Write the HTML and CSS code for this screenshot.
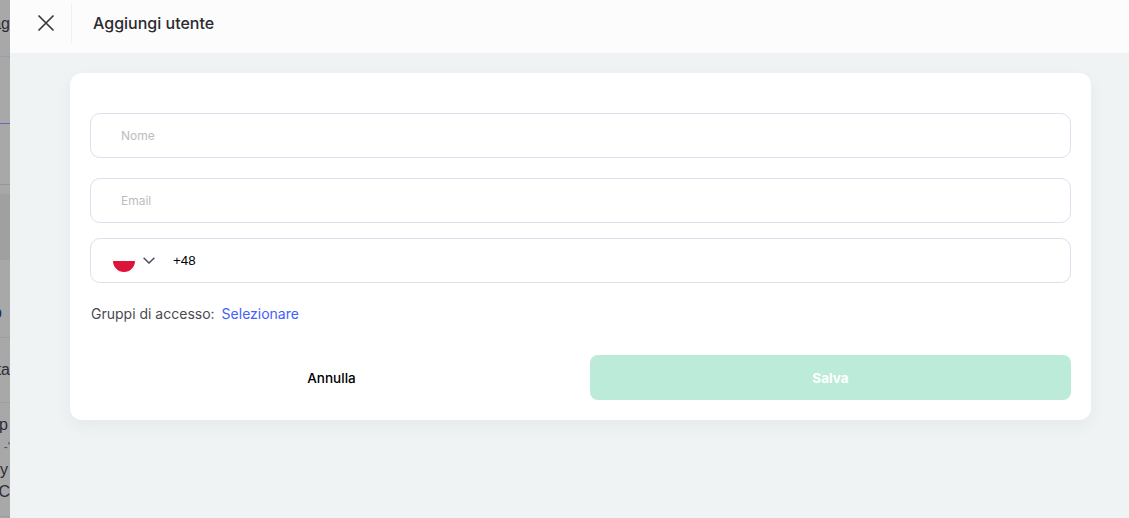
FILE: index.html
```html
<!DOCTYPE html>
<html lang="it">
<head>
<meta charset="utf-8">
<title>Aggiungi utente</title>
<link rel="stylesheet" href="styles.css">
</head>
<body>
<div class="backdrop">
  <div class="frag frag-ag">ag</div>
  <div class="line line-1"></div>
  <div class="line line-2"></div>
  <div class="line line-3"></div>
  <div class="band"></div>
  <div class="frag frag-o">o</div>
  <div class="line line-4"></div>
  <div class="frag frag-ta">ta</div>
  <div class="line line-5"></div>
  <div class="frag frag-p">p</div>
  <div class="frag frag-dash">-'</div>
  <div class="frag frag-y">y</div>
  <div class="frag frag-c">C</div>
  <div class="line line-6"></div>
</div>
<main class="panel">
  <header class="topbar">
    <button class="close" type="button" aria-label="Chiudi">
      <svg width="18" height="18" viewBox="0 0 18 18"><path d="M1.500 1.500l15 15M16.500 1.500l-15 15" fill="none" stroke="#3a3a3a" stroke-width="1.700"/></svg>
    </button>
    <h1 class="title">Aggiungi utente</h1>
  </header>
  <div class="content">
    <form class="card">
      <div class="field field-name"><span class="placeholder">Nome</span></div>
      <div class="field field-email"><span class="placeholder">Email</span></div>
      <div class="field field-phone">
        <span class="flag"></span>
        <svg class="chevron" width="12" height="7" viewBox="0 0 12 7"><path d="M.6.8L6 6l5.400-5.200" fill="none" stroke="#48505c" stroke-width="1.500"/></svg>
        <span class="prefix">+48</span>
      </div>
      <div class="access"><span class="access-label">Gruppi di accesso:</span><a class="access-link">Selezionare</a></div>
      <div class="actions">
        <button class="btn btn-cancel" type="button">Annulla</button>
        <button class="btn btn-save" type="button">Salva</button>
      </div>
    </form>
  </div>
</main>
</body>
</html>
```

FILE: styles.css
```css
* { box-sizing: border-box; }
html, body { height: 100%; }
body {
  margin: 0;
  display: flex;
  height: 518px;
  overflow: hidden;
  font-family: Inter, "Liberation Sans", sans-serif;
  background: #eff3f4;
}
.backdrop {
  position: relative;
  width: 10px;
  flex: none;
  overflow: hidden;
  background: #a8a8a8;
}
.frag {
  position: absolute;
  right: 0;
  font-family: "Liberation Sans", sans-serif;
  font-size: 16px;
  line-height: 18px;
  color: #2c2c34;
  white-space: nowrap;
}
.frag-ag { top: 15px; }
.frag-o { top: 304px; right: auto; left: -7px; color: #1c2c60; }
.frag-ta { top: 361px; }
.frag-p { top: 416px; right: 2px; }
.frag-dash { top: 438px; font-size: 12px; color: #55555c; }
.frag-y { top: 461px; right: 2px; }
.frag-c { top: 483px; right: 0; }
.line { position: absolute; left: 0; width: 10px; height: 1px; }
.line-1 { top: 56px; background: #9c9cb0; }
.line-2 { top: 123px; background: #6a6ab0; }
.line-3 { top: 184px; background: #969696; }
.line-4 { top: 337px; background: #9e9e9e; }
.line-5 { top: 402px; background: #9e9e9e; }
.line-6 { top: 516px; background: #9e9e9e; }
.band { position: absolute; left: 0; top: 194px; width: 10px; height: 66px; background: #a0a0a0; }
.panel {
  flex: 1;
  min-width: 0;
  display: flex;
  flex-direction: column;
}
.topbar {
  height: 53px;
  flex: none;
  display: flex;
  align-items: flex-start;
  padding-top: 3px;
  background: #fcfcfd;
}
.close {
  width: 62px;
  height: 40px;
  padding: 0 0 0 11px;
  border: 0;
  border-right: 1px solid #f0f0f2;
  background: none;
  display: flex;
  align-items: center;
  justify-content: center;
}
.title {
  margin: 0 0 0 21px;
  font-size: 16px;
  line-height: 40px;
  font-weight: 500;
  color: #2b2b2f;
}
.content { flex: 1; padding: 20px 38px 0 60px; }
.card {
  height: 347px;
  padding: 40px 20px 20px;
  background: #fff;
  border-radius: 12px;
  box-shadow: 0 6px 14px rgba(190, 200, 210, .22);
  display: flex;
  flex-direction: column;
}
.field {
  height: 45px;
  flex: none;
  display: flex;
  align-items: center;
  border: 1px solid #e0deec;
  border-radius: 10px;
}
.field-email { margin-top: 20px; }
.field-phone { margin-top: 15px; }
.placeholder {
  margin-left: 30px;
  font-size: 12px;
  color: #bdbdbd;
}
.flag {
  width: 22px;
  height: 11px;
  margin: 11px 0 0 22px;
  background: #dc143c;
  border-radius: 0 0 11px 11px;
}
.chevron { margin: 0 0 0 8px; }
.prefix {
  margin-left: 18px;
  font-family: "Liberation Sans", sans-serif;
  font-size: 13.330px;
  color: #000;
}
.access {
  margin-top: 21px;
  padding-left: 1px;
  font-size: 14px;
  line-height: 20px;
  color: #4a4a50;
  display: flex;
  gap: 7px;
}
.access-link { color: #4460fb; }
.actions {
  margin-top: 31px;
  display: flex;
  gap: 19px;
}
.btn {
  flex: 1;
  height: 45px;
  border: 0;
  border-radius: 8px;
  font-family: inherit;
  font-size: 13.500px;
}
.btn-cancel { text-indent: 2px; background: none; color: #000; font-weight: 500; }
.btn-save { background: #bcebda; color: #fff; font-weight: 700; }
```
